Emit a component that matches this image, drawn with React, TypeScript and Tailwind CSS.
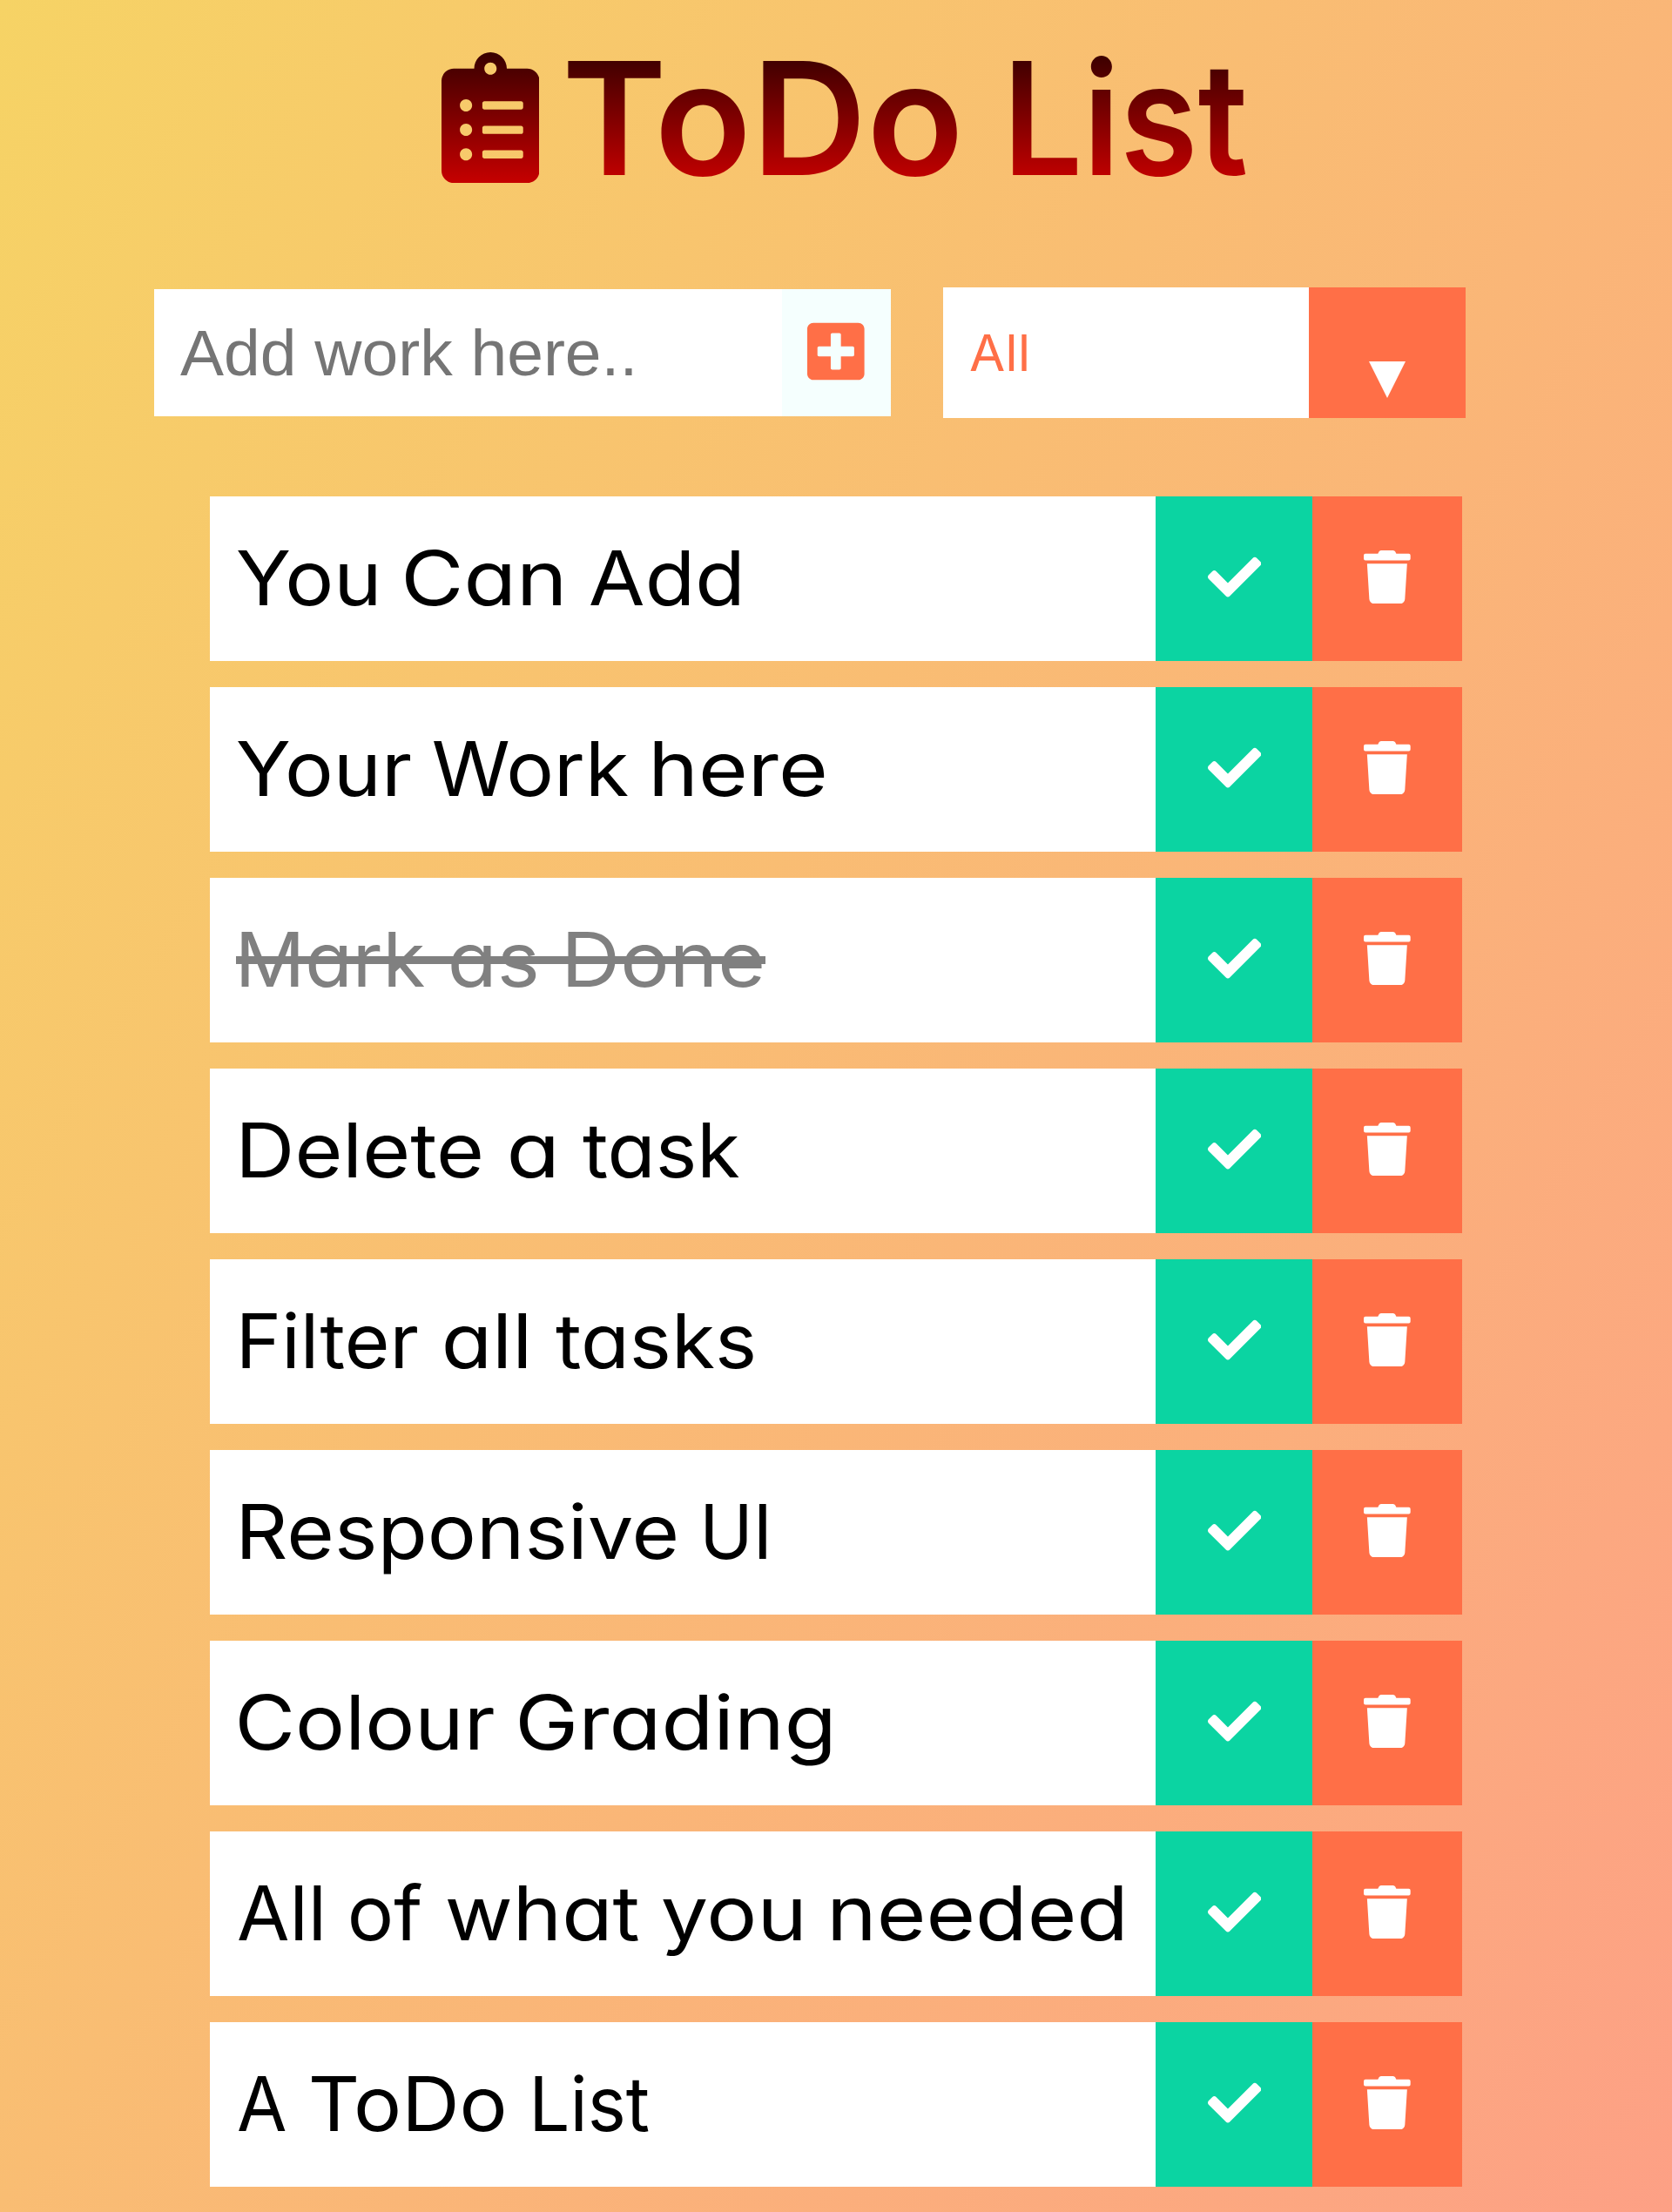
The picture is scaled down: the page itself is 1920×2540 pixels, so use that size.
import { useLayoutEffect, useRef, useState } from "react";
import { FaCheck, FaPlusSquare, FaTrash } from "react-icons/fa";

type WordSpec = { text: string; gap: number; width: number };
type Task = { words: WordSpec[]; done?: boolean };

const word = (text: string, gap: number, width: number): WordSpec => ({ text, gap, width });

const tasks: Task[] = [
  { words: [word("You", 2, 159), word("Can", 34, 178.5), word("Add", 33.5, 172)] },
  { words: [word("Your", 2, 199), word("Work", 26, 224), word("here", 29, 195)] },
  { words: [word("Mark", 6, 211), word("as", 29, 99), word("Done", 36, 223)], done: true },
  { words: [word("Delete", 7, 274), word("a", 33, 51), word("task", 33, 181)] },
  { words: [word("Filter", 7, 202), word("all", 30, 94.5), word("tasks", 33.5, 227.5)] },
  { words: [word("Responsive", 7, 498), word("UI", 34, 70)] },
  { words: [word("Colour", 3.5, 292), word("Grading", 30, 357.5)] },
  {
    words: [
      word("All", 3, 95),
      word("of", 34, 81),
      word("what", 28.5, 220.5),
      word("you", 28, 159),
      word("needed", 36, 334),
    ],
  },
  { words: [word("A", 3, 54), word("ToDo", 30, 221), word("List", 35, 131)] },
];

/** A word whose visible glyphs are stretched to fill exactly the given width. */
function FittedWord({ text, gap, width, className = "" }: WordSpec & { className?: string }) {
  const ref = useRef<HTMLSpanElement>(null);
  const [fit, setFit] = useState({ scale: 1, shift: 0 });

  useLayoutEffect(() => {
    const el = ref.current;
    const ctx = document.createElement("canvas").getContext("2d");
    if (!el || !ctx) return;
    const style = getComputedStyle(el);
    ctx.font = `${style.fontWeight} ${style.fontSize} ${style.fontFamily}`;
    const first = ctx.measureText(text[0]);
    const last = ctx.measureText(text[text.length - 1]);
    const left = -first.actualBoundingBoxLeft;
    const right = last.width - last.actualBoundingBoxRight;
    const scale = width / (el.offsetWidth - left - right);
    setFit({ scale, shift: -left * scale });
  }, [text, width]);

  return (
    <span className="block shrink-0" style={{ marginLeft: gap, width }}>
      <span
        ref={ref}
        className={`inline-block origin-left whitespace-nowrap ${className}`}
        style={{ transform: `translateX(${fit.shift}px) scaleX(${fit.scale})` }}
      >
        {text}
      </span>
    </span>
  );
}

function ClipboardIcon() {
  return (
    <svg viewBox="0 0 384 512" className="mt-[60px] h-[150px] w-[112.5px] shrink-0">
      <defs>
        <linearGradient id="clip" gradientUnits="userSpaceOnUse" x1="0" y1="-205" x2="0" y2="720">
          <stop offset="0" stopColor="#000" />
          <stop offset="1" stopColor="#f00" />
        </linearGradient>
      </defs>
      <path
        fill="url(#clip)"
        d="M336 64h-80c0-35.3-28.7-64-64-64s-64 28.7-64 64H48C21.5 64 0 85.500 0 112v352c0 26.500 21.500 48 48 48h288c26.500 0 48-21.500 48-48V112c0-26.500-21.500-48-48-48zM96 424c-13.300 0-24-10.700-24-24s10.700-24 24-24 24 10.700 24 24-10.700 24-24 24zm0-96c-13.300 0-24-10.700-24-24s10.700-24 24-24 24 10.700 24 24-10.700 24-24 24zm0-96c-13.300 0-24-10.700-24-24s10.700-24 24-24 24 10.700 24 24-10.700 24-24 24zm96-192c13.300 0 24 10.700 24 24s-10.700 24-24 24-24-10.700-24-24 10.700-24 24-24zm128 368c0 4.400-3.600 8-8 8H168c-4.400 0-8-3.600-8-8v-16c0-4.400 3.600-8 8-8h144c4.400 0 8 3.600 8 8v16zm0-96c0 4.400-3.600 8-8 8H168c-4.400 0-8-3.600-8-8v-16c0-4.400 3.600-8 8-8h144c4.400 0 8 3.600 8 8v16zm0-96c0 4.400-3.600 8-8 8H168c-4.400 0-8-3.600-8-8v-16c0-4.400 3.600-8 8-8h144c4.400 0 8 3.600 8 8v16z"
      />
    </svg>
  );
}

const titleClass = "bg-linear-to-b/srgb from-black to-[#f00] bg-clip-text text-transparent";

function TaskRow({ words, done }: Task) {
  return (
    <li className="flex h-[189px] bg-white">
      <div
        className={
          "relative ml-[30px] flex w-[1056px] text-[86px] leading-[189px] [font-feature-settings:'cv11'] " +
          (done ? "text-[#808080]" : "text-black")
        }
      >
        {words.map((w) => (
          <FittedWord key={w.text} {...w} />
        ))}
        {done && <span className="absolute top-[90px] left-0 h-[9px] w-[608px] bg-[#808080]" />}
      </div>
      <button className="flex w-[180.300px] items-center justify-center bg-[#0bd4a2] pb-1 text-[61.300px] text-white">
        <FaCheck />
      </button>
      <button className="flex flex-1 items-center justify-center bg-[#ff6f47] pb-1 text-white">
        <FaTrash className="h-[61.300px] w-[53.700px]" />
      </button>
    </li>
  );
}

export default function App() {
  return (
    <div className="flex h-[2540px] w-[1920px] flex-col overflow-hidden bg-[linear-gradient(120deg,#f6d365_0%,#fda085_100%)] font-['Inter',sans-serif]">
      <header className="flex h-[330px] pl-[506.500px] text-[180px] leading-[271px] font-semibold">
        <ClipboardIcon />
        <h1 className="flex">
          <FittedWord text="ToDo" gap={33} width={447} className={titleClass} />
          <FittedWord text="List" gap={64.3} width={267.5} className={titleClass} />
        </h1>
      </header>

      <form className="ml-[177px] flex h-[150px] items-center">
        <input
          placeholder="Add work here.."
          className="h-[146px] w-[720.500px] bg-white pl-[30px] font-['Liberation_Sans',sans-serif] text-[75px] outline-none placeholder:text-[#757575] placeholder:opacity-100"
        />
        <button
          type="button"
          className="flex h-[146px] w-[125.500px] items-center justify-center bg-[#f5fffe] pb-1 text-[#ff6f47]"
        >
          <FaPlusSquare className="h-[75px] w-[65.600px]" />
        </button>
        <div className="ml-[60px] flex h-[150px] w-[600px] bg-white text-[58px] leading-[150px] text-[#ff6f47]">
          <div className="flex w-[420px] pl-[31px]">
            <FittedWord text="All" gap={0} width={65} />
          </div>
          <div className="flex flex-1 justify-center bg-[#ff6f47] pt-[85px]">
            <svg viewBox="0 0 42 42" className="h-[42px] w-[42px]">
              <path d="M0 0H42L21 42Z" fill="#fff" />
            </svg>
          </div>
        </div>
      </form>

      <ul className="mt-[90px] ml-[241px] flex w-[1438px] flex-col gap-[30px]">
        {tasks.map((t, i) => (
          <TaskRow key={i} {...t} />
        ))}
      </ul>
    </div>
  );
}
